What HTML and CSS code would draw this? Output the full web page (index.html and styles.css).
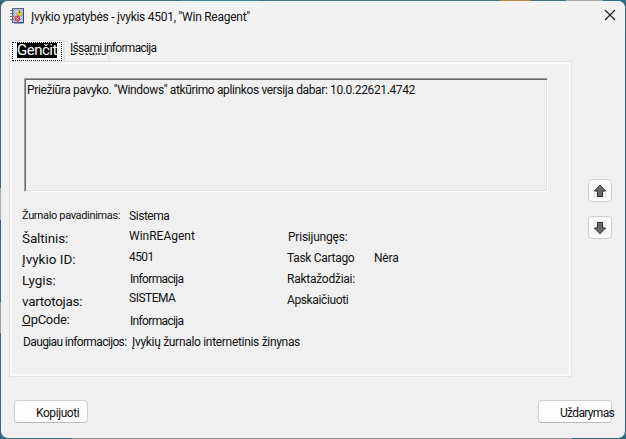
FILE: index.html
```html
<!DOCTYPE html>
<html lang="lt">
<head>
<meta charset="utf-8">
<title>Įvykio ypatybės</title>
<link rel="stylesheet" href="styles.css">
</head>
<body>
<div class="dialog">
  <header class="titlebar">
    <svg class="app-icon" width="15" height="16" viewBox="0 0 15 16">
      <rect x="2.5" y=".5" width="11" height="14" fill="#a9bde2" stroke="#54688f"/>
      <path d="M5 3.500h7M5 6.500h7M5 9.500h7M5 12.500h7" stroke="#dce7f8"/>
      <path d="M13.500 1v14H4" fill="none" stroke="#384c78"/>
      <path d="M0 2.500h4M0 5.500h4M0 8.500h4M0 11.500h4" stroke="#6d6d72"/>
      <path d="M9.500 1.500l3 5.500h-6z" fill="#f5d432" stroke="#d5a51b" stroke-width=".8"/>
      <path d="M9.500 3.200v2" stroke="#554100"/>
      <circle cx="7.500" cy="10.500" r="2.900" fill="#d8434b"/>
      <path d="M6.500 9.500l2 2m0-2l-2 2" stroke="#fff" stroke-width=".9"/>
    </svg>
    <h1 class="title t-title">Įvykio ypatybės - įvykis 4501, "Win Reagent"</h1>
    <svg class="close" width="12" height="12" viewBox="0 0 12 12"><path d="M1 1l10 10M11 1L1 11" stroke="#1a1a1a" stroke-width="1.100"/></svg>
  </header>
  <main class="content">
    <section class="left">
      <nav class="tabs">
        <div class="tab active"><span class="focus"><span class="selected">Genčit</span></span></div>
        <div class="tab second"><span class="under">Details</span><span class="over">Išsami informacija</span></div>
      </nav>
      <div class="panel">
        <div class="message"><span class="t-message">Priežiūra pavyko. "Windows" atkūrimo aplinkos versija dabar: 10.0.22621.4742</span></div>
        <div class="details">
          <span class="small t-log">Žurnalo pavadinimas:</span><span class="t-sys">Sistema</span><span></span><span></span>
          <span class="large t-src">Šaltinis:</span><span class="up t-agent">WinREAgent</span><span class="inset t-logged">Prisijungęs:</span><span></span>
          <span class="large t-id">Įvykio ID:</span><span class="up t-num">4501</span><span class="t-task">Task Cartago</span><span class="t-none">Nėra</span>
          <span class="large t-level">Lygis:</span><span class="inset t-info">Informacija</span><span class="t-key">Raktažodžiai:</span><span></span>
          <span class="large t-user">vartotojas:</span><span class="up2 t-system">SISTEMA</span><span class="t-comp">Apskaičiuoti</span><span></span>
          <span class="op t-op"><u>O</u>pCode:</span><span class="inset t-info">Informacija</span><span></span><span></span>
          <span class="t-more">Daugiau informacijos:</span><span class="link t-link">Įvykių žurnalo internetinis žinynas</span>
        </div>
      </div>
    </section>
    <aside class="arrows">
      <button class="arrow"><svg width="14" height="14" viewBox="0 0 14 14"><rect width="14" height="14" fill="#f0f0f0"/><path d="M7 1.200L12.600 7H9.500v5.500h-5V7H1.400z" fill="#6a6a6a" stroke="#333"/></svg></button>
      <button class="arrow"><svg width="14" height="14" viewBox="0 0 14 14"><rect width="14" height="14" fill="#f0f0f0"/><path d="M7 12.800L12.600 7H9.500V1.500h-5V7H1.400z" fill="#6a6a6a" stroke="#333"/></svg></button>
    </aside>
  </main>
  <footer class="footer">
    <button class="btn"><span class="t-copy">Kopijuoti</span></button>
    <button class="btn"><span class="t-close">Uždarymas</span></button>
  </footer>
</div>
</body>
</html>
```
FILE: styles.css
```css
* { box-sizing: border-box; }
html { background: #356a80; }
body {
  margin: 0; width: 626px; height: 439px; overflow: hidden; padding: 1px;
  font: 12px/16px Roboto, "Noto Sans", sans-serif; color: #111;
  background: linear-gradient(90deg, #2b7186 0 72px, #949494 72px 572px, #2b6379 572px) 0 438px / 626px 1px no-repeat,
    linear-gradient(90deg, #427487 0 180px, #368da5 180px 260px, #467689 260px 500px, #b08a3c 500px 531px, #427487 531px 566px, #aaa 566px 603px, #287186 603px) 0 0 / 626px 1px no-repeat,
    linear-gradient(#36697f 0 188px, #aaa 188px 220px, #2d5d91 220px 240px, #3d6f83 240px 302px, #a59c9d 302px 333px, #36697f 333px) 0 0 / 1px 439px no-repeat,
    #356a80;
}
.dialog { width: 624px; height: 437px; background: #f0f0f0; border-radius: 7px; overflow: hidden; display: flex; flex-direction: column; }
.titlebar { height: 30px; background: #f3f3f3; display: flex; align-items: center; padding: 0 9px 0 9px; }
.title { flex: 1; margin: 2px 0 0 6px; font-size: 12px; font-weight: 400; white-space: nowrap; }
.close { display: block; margin-bottom: 2px; }
.content { display: flex; height: 346px; padding: 9px 0 0 8px; }
.left { width: 563px; }
.tabs { height: 21px; display: flex; align-items: flex-end; }
.tab { height: 20px; border: 1px solid #e0e0e0; border-bottom: 0; position: relative; white-space: nowrap; }
.tab.active { width: 55px; height: 21px; background: #fafafa; padding: 1px 1px 0 2px; }
.focus { display: block; width: 50px; height: 19px; border: 1px dotted #000; padding: 0 4px; }
.selected { display: block; width: 40px; height: 15px; overflow: hidden; background: #000; color: #fff; font-size: 15px; line-height: 15px; letter-spacing: -.5px; }
.second { width: 45px; background: #f3f3f3; }
.under { display: block; margin: 1px 0 0 5px; }
.over { position: absolute; left: 4px; top: -2px; height: 13px; padding-left: 1px; line-height: 16px; background: #f1f1f1; letter-spacing: -.7px; }
.panel { height: 316px; border: 1px solid #e2e2e2; outline: 2px solid #f9f9f9; outline-offset: -3px; padding: 16px 14px 0; }
.message { width: 524px; height: 114px; border: 1px solid; border-color: #a0a0a0 #fff #fff #a0a0a0; box-shadow: inset 1px 1px #696969, inset -1px -1px #e3e3e3; padding: 3px 0 0 2px; white-space: nowrap; }
.details { margin: 13px 0 0 -2px; display: grid; grid-template-columns: 107px 158px 87px 1fr; grid-auto-rows: 21px; align-items: center; white-space: nowrap; }
.small { font-size: 11px; }
.large { font-size: 13.5px; padding-top: 2px; }
.op { font-size: 13px; padding-bottom: 2px; }
.up { padding-bottom: 2px; }
.up2 { padding-bottom: 4px; }
.inset { padding-left: 1px; }
.link { grid-column: span 3; padding-left: 3px; }
.arrows { margin: 139px 0 0 16px; display: flex; flex-direction: column; gap: 14px; }
.arrow { width: 24px; height: 23px; padding: 0; border: 1px solid #cfcfcf; border-radius: 4px; background: #fdfdfd; display: flex; align-items: center; justify-content: center; }
.footer { display: flex; justify-content: space-between; padding: 23px 13px 0 13px; }
.btn { width: 74px; height: 23px; border: 1px solid #d0d0d0; border-bottom-color: #bababa; border-radius: 4px; background: #fdfdfd; font: inherit; color: #111; padding: 2px 0 0 21px; text-align: left; white-space: nowrap; }
.t-title { letter-spacing: -.26px; }
.t-message { letter-spacing: -.37px; }
.t-log { letter-spacing: -.34px; }
.t-sys { letter-spacing: -.45px; }
.t-src { letter-spacing: -.12px; }
.t-logged { letter-spacing: -.22px; }
.t-num { letter-spacing: -.6px; }
.t-task { letter-spacing: -.3px; }
.t-none { letter-spacing: -.2px; }
.t-info { letter-spacing: -.65px; }
.t-key { letter-spacing: -.25px; }
.t-user { letter-spacing: -.3px; }
.t-system { letter-spacing: -.5px; }
.t-comp { letter-spacing: -.38px; }
.t-op { letter-spacing: -.3px; }
.t-more { letter-spacing: -.62px; padding-left: 1px; }
.t-link { letter-spacing: -.31px; }
.t-copy { letter-spacing: -.42px; }
.t-close { letter-spacing: -.66px; }
```
